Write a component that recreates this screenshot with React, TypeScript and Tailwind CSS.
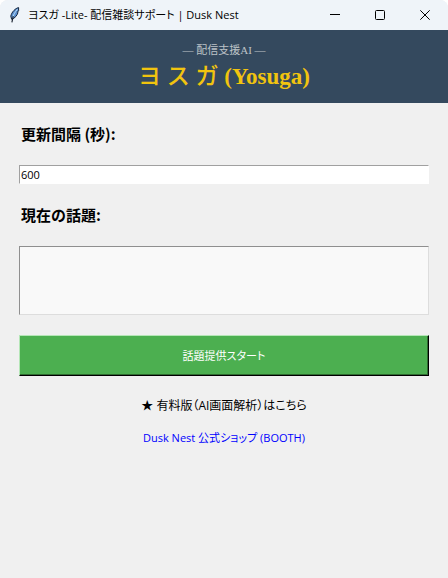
import React from "react";

const uiFont = "font-['Open_Sans','Noto_Sans_CJK_JP',sans-serif] [font-feature-settings:'palt']";
const serifFont = "font-['Liberation_Serif','Noto_Sans_CJK_JP',serif]";
const labelFont = "font-['Noto_Sans_CJK_JP',sans-serif]";

function FeatherIcon() {
  return (
    <svg width="12" height="16" viewBox="0 0 12 16" aria-hidden="true">
      <path d="M9.6 0.6C6.5 1.2 2.6 5 1.8 9.2L2.6 12.2C6 11.4 8.4 8 9 5.4L8.4 5.2L9.6 3.8Z" fill="#5b8fce" stroke="#16253c" strokeWidth="1" />
      <path d="M8.4 2.2C6 5 4 8.4 3.4 12" fill="none" stroke="#b9dcf7" strokeWidth="1" />
      <path d="M4.2 9.2L2.9 15.4" stroke="#111827" strokeWidth="1.1" />
    </svg>
  );
}

function TitleBar() {
  return (
    <div className="flex h-[30px] items-center bg-[#eff4f9] pl-[9px]">
      <FeatherIcon />
      <h1 className={`ml-[7px] flex-1 whitespace-nowrap text-[11px] leading-4 text-black ${uiFont}`}>
        ヨスガ -Lite- 配信雑談サポート | Dusk Nest
      </h1>
      <div className="flex h-full">
        <button type="button" aria-label="最小化" className="flex w-[45px] items-center justify-center">
          <svg width="10" height="10" viewBox="0 0 10 10"><path d="M0 4.5H10" stroke="#000" /></svg>
        </button>
        <button type="button" aria-label="最大化" className="flex w-[45px] items-center justify-center">
          <svg width="10" height="10" viewBox="0 0 10 10"><rect x="0.5" y="0.5" width="9" height="9" rx="1" fill="none" stroke="#000" /></svg>
        </button>
        <button type="button" aria-label="閉じる" className="flex w-[46px] items-center justify-center">
          <svg width="10" height="10" viewBox="0 0 10 10"><path d="M0.3 0.3L9.7 9.7M9.7 0.3L0.3 9.7" stroke="#000" /></svg>
        </button>
      </div>
    </div>
  );
}

export default function App() {
  return (
    <div className="min-h-screen overflow-hidden rounded-t-lg bg-[#f0f0f0]">
      <TitleBar />
      <header className={`bg-[#34495e] pt-3 pb-3 text-center ${serifFont}`}>
        <p className="text-[11px] leading-4 text-[#bdc3c7]">― 配信支援AI ―</p>
        <h2 className="mt-1 text-[23px] leading-[29px] font-bold text-[#f1c40f]">
          <span className="font-medium">ヨ ス ガ</span> (Yosuga)
        </h2>
      </header>
      <main className="flex flex-col px-[19px] pt-[21px]">
        <label htmlFor="interval" className={`px-[2px] text-[15px] leading-5 font-bold text-black ${labelFont}`}>
          更新間隔 (秒):
        </label>
        <input
          id="interval"
          type="text"
          defaultValue="600"
          className={`mt-[21px] h-[19px] w-full border border-t-[#a0a0a0] border-r-white border-b-white border-l-[#a0a0a0] bg-white px-px text-[11px] leading-4 text-black outline-none ${uiFont}`}
        />
        <label htmlFor="topic" className={`mt-[21px] px-[2px] text-[15px] leading-5 font-bold text-black ${labelFont}`}>
          現在の話題:
        </label>
        <textarea
          id="topic"
          className="mt-[21px] h-[69px] w-full resize-none border border-t-[#8f8f8f] border-r-[#dddddd] border-b-[#dddddd] border-l-[#8f8f8f] bg-[#f9f9f9] outline-none"
        />
        <button
          type="button"
          className={`mt-5 h-[41px] w-full border border-t-[#b5e6b7] border-r-black border-b-black border-l-[#b5e6b7] bg-[#4caf50] text-[11px] leading-4 text-white shadow-[inset_-1px_-1px_0_#2f6b31] ${uiFont}`}
        >
          話題提供スタート
        </button>
        <p className={`mt-[22px] text-center text-[12px] leading-4 text-black ${uiFont}`}>
          ★ 有料版（AI画面解析）はこちら
        </p>
        <a href="#booth" className={`mt-4 self-center text-[11px] leading-4 text-[#0000ff] ${uiFont}`}>
          Dusk Nest 公式ショップ (BOOTH)
        </a>
      </main>
    </div>
  );
}
